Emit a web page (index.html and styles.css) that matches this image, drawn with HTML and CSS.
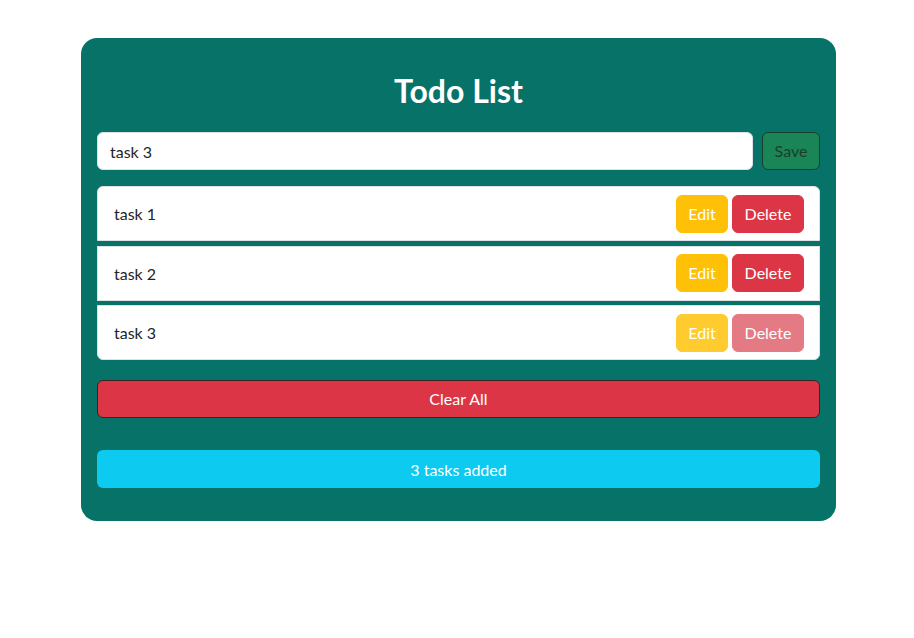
FILE: index.html
```html
<!DOCTYPE html>
<html>
<head>
<meta charset="utf-8">
<link rel="stylesheet" href="styles.css">
</head>
<body>
<div class="card">
  <h1 class="title">Todo List</h1>
  <div class="input-row">
    <input class="task-input" type="text" value="task 3">
    <button class="btn btn-save">Save</button>
  </div>
  <ul class="list">
    <li class="item"><span>task 1</span><div class="actions"><button class="btn btn-edit">Edit</button><button class="btn btn-delete">Delete</button></div></li>
    <li class="item"><span>task 2</span><div class="actions"><button class="btn btn-edit">Edit</button><button class="btn btn-delete">Delete</button></div></li>
    <li class="item"><span>task 3</span><div class="actions"><button class="btn btn-edit faded-edit">Edit</button><button class="btn btn-delete faded-delete">Delete</button></div></li>
  </ul>
  <button class="btn btn-clear">Clear All</button>
  <div class="info">3 tasks added</div>
</div>
</body>
</html>
```
FILE: styles.css
```css
html, body {
  margin: 0;
  padding: 0;
  background: #ffffff;
  font-family: "Lato", "Open Sans", sans-serif;
}
.card {
  width: 755px;
  box-sizing: border-box;
  margin: 38px 0 0 81px;
  background: #077368;
  border-radius: 16px;
  padding: 34px 16px 33px 16px;
  display: flex;
  flex-direction: column;
}
.title {
  margin: 0 0 22px 0;
  text-align: center;
  color: #ffffff;
  font-size: 32px;
  font-weight: 700;
  line-height: 38px;
}
.input-row {
  display: flex;
  gap: 9px;
  height: 38px;
}
.task-input {
  flex: 1;
  box-sizing: border-box;
  height: 38px;
  border: 1px solid #dee2e6;
  border-radius: 6px;
  padding: 6px 12px;
  font-family: inherit;
  font-size: 16px;
  color: #212529;
  outline: none;
}
.btn {
  box-sizing: border-box;
  height: 38px;
  border: 1px solid transparent;
  border-radius: 6px;
  padding: 6px 12px;
  font-family: inherit;
  font-size: 16px;
  line-height: 24px;
  color: #ffffff;
  cursor: pointer;
}
.btn-save {
  width: 58px;
  padding: 6px 0;
  background: #1a8556;
  border-color: #14402c;
  color: #1f3d2f;
}
.list {
  list-style: none;
  margin: 16px 0 0 0;
  padding: 0;
  display: flex;
  flex-direction: column;
  gap: 4.5px;
}
.item {
  height: 55px;
  box-sizing: border-box;
  background: #ffffff;
  border: 1px solid #dee2e6;
  padding: 0 15px 0 16px;
  display: flex;
  align-items: center;
  justify-content: space-between;
  font-size: 16px;
  color: #212529;
}
.item:first-child {
  border-radius: 6px 6px 0 0;
}
.item:last-child {
  border-radius: 0 0 6px 6px;
}
.actions {
  display: flex;
  gap: 4px;
}
.btn-edit {
  width: 52px;
  padding: 6px 0;
  background: #ffc107;
  border-color: #ffc107;
}
.btn-delete {
  width: 72px;
  padding: 6px 0;
  background: #dc3545;
  border-color: #dc3545;
}
.faded-edit {
  background: #ffcb2f;
  border-color: #ffcb2f;
}
.faded-delete {
  background: #e47a84;
  border-color: #e47a84;
}
.btn-clear {
  margin-top: 20px;
  width: 100%;
  background: #dc3545;
  border-color: #3a2327;
}
.info {
  margin-top: 32px;
  height: 38px;
  box-sizing: border-box;
  border-radius: 6px;
  background: #0dcaf0;
  color: #ffffff;
  font-size: 16px;
  display: flex;
  align-items: center;
  justify-content: center;
}
```
